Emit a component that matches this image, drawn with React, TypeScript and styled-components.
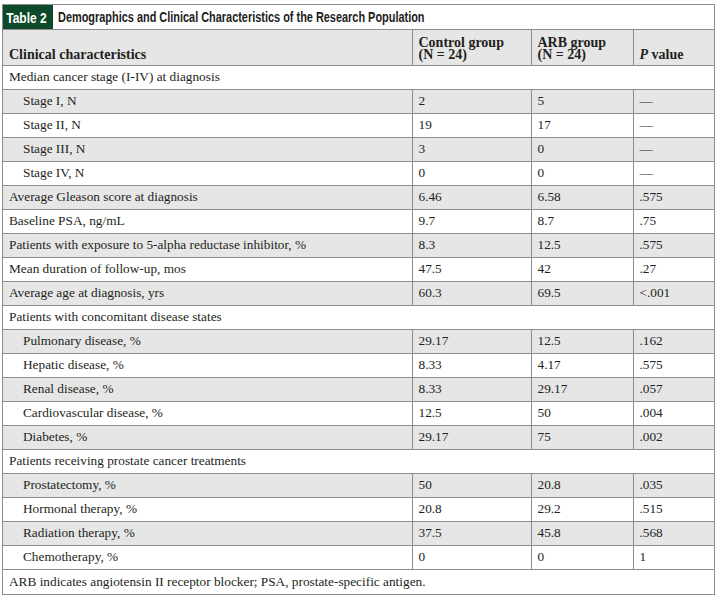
import React from 'react'
import styled, { createGlobalStyle } from 'styled-components'

const Global = createGlobalStyle`
  html, body { margin: 0; padding: 0; background: #ffffff; }
  body { font-family: "Liberation Serif", "Times New Roman", serif; color: #231f20; }
`

const Page = styled.div`
  padding: 4px 3px 0 2px;
`

const Frame = styled.div`
  width: 711px;
  border: 1px solid #8d8d8d;
`

const TitleBar = styled.div`
  display: flex;
  align-items: stretch;
  height: 24px;
  border-bottom: 1px solid #8d8d8d;
  font-family: "Liberation Sans", Arial, sans-serif;
  font-weight: 700;
  overflow: hidden;
`

const Label = styled.div`
  display: flex;
  align-items: center;
  width: 50px;
  background: #0c4a2a;
  color: #ffffff;
  font-size: 15px;
  span {
    display: inline-block;
    padding-left: 4px;
    transform: scaleX(0.8);
    transform-origin: left center;
    white-space: nowrap;
  }
`

const Caption = styled.div`
  display: flex;
  align-items: center;
  padding-left: 5px;
  color: #1d1d1b;
  font-size: 14px;
  span {
    display: inline-block;
    transform: scaleX(0.78);
    transform-origin: left center;
    white-space: nowrap;
  }
`

const Table = styled.table`
  width: 100%;
  border-collapse: collapse;
  table-layout: fixed;
  font-size: 13.3px;
`

const Head = styled.th<{ $w: number }>`
  box-sizing: border-box;
  width: ${p => p.$w}px;
  height: 35px;
  background: #e6e6e6;
  text-align: left;
  vertical-align: bottom;
  padding: 0 6px 4px 6px;
  font-weight: 700;
  font-size: 14px;
  line-height: 12px;
  border-left: 1px solid #8d8d8d;
  &:first-child { border-left: none; }
`

const Row = styled.tr<{ $shade?: boolean }>`
  background: ${p => (p.$shade ? '#e6e6e6' : '#ffffff')};
  border-top: 1px solid #8d8d8d;
`

const Cell = styled.td<{ $indent?: boolean }>`
  box-sizing: border-box;
  height: 24px;
  padding: 0 6px 0 ${p => (p.$indent ? '20px' : '6px')};
  vertical-align: middle;
  white-space: nowrap;
  border-left: 1px solid #8d8d8d;
  &:first-child { border-left: none; }
`

const Span = styled.td<{ $tall?: boolean }>`
  box-sizing: border-box;
  height: ${p => (p.$tall ? '25px' : '24px')};
  padding: 0 6px;
  vertical-align: middle;
  white-space: nowrap;
`

type Line =
  | { kind: 'group'; text: string; note?: boolean }
  | { kind: 'data'; label: string; a: string; b: string; p: string; indent?: boolean; shade?: boolean }

const lines: Line[] = [
  { kind: 'group', text: 'Median cancer stage (I-IV) at diagnosis' },
  { kind: 'data', label: 'Stage I, N', a: '2', b: '5', p: '\u2014', indent: true, shade: true },
  { kind: 'data', label: 'Stage II, N', a: '19', b: '17', p: '\u2014', indent: true },
  { kind: 'data', label: 'Stage III, N', a: '3', b: '0', p: '\u2014', indent: true, shade: true },
  { kind: 'data', label: 'Stage IV, N', a: '0', b: '0', p: '\u2014', indent: true },
  { kind: 'data', label: 'Average Gleason score at diagnosis', a: '6.46', b: '6.58', p: '.575', shade: true },
  { kind: 'data', label: 'Baseline PSA, ng/mL', a: '9.7', b: '8.7', p: '.75' },
  { kind: 'data', label: 'Patients with exposure to 5-alpha reductase inhibitor, %', a: '8.3', b: '12.5', p: '.575', shade: true },
  { kind: 'data', label: 'Mean duration of follow-up, mos', a: '47.5', b: '42', p: '.27' },
  { kind: 'data', label: 'Average age at diagnosis, yrs', a: '60.3', b: '69.5', p: '<.001', shade: true },
  { kind: 'group', text: 'Patients with concomitant disease states' },
  { kind: 'data', label: 'Pulmonary disease, %', a: '29.17', b: '12.5', p: '.162', indent: true, shade: true },
  { kind: 'data', label: 'Hepatic disease, %', a: '8.33', b: '4.17', p: '.575', indent: true },
  { kind: 'data', label: 'Renal disease, %', a: '8.33', b: '29.17', p: '.057', indent: true, shade: true },
  { kind: 'data', label: 'Cardiovascular disease, %', a: '12.5', b: '50', p: '.004', indent: true },
  { kind: 'data', label: 'Diabetes, %', a: '29.17', b: '75', p: '.002', indent: true, shade: true },
  { kind: 'group', text: 'Patients receiving prostate cancer treatments' },
  { kind: 'data', label: 'Prostatectomy, %', a: '50', b: '20.8', p: '.035', indent: true, shade: true },
  { kind: 'data', label: 'Hormonal therapy, %', a: '20.8', b: '29.2', p: '.515', indent: true },
  { kind: 'data', label: 'Radiation therapy, %', a: '37.5', b: '45.8', p: '.568', indent: true, shade: true },
  { kind: 'data', label: 'Chemotherapy, %', a: '0', b: '0', p: '1', indent: true },
  { kind: 'group', text: 'ARB indicates angiotensin II receptor blocker; PSA, prostate-specific antigen.', note: true },
]

export default function App() {
  return (
    <>
      <Global />
      <Page>
        <Frame>
          <TitleBar>
            <Label><span>Table 2</span></Label>
            <Caption><span>Demographics and Clinical Characteristics of the Research Population</span></Caption>
          </TitleBar>
          <Table>
            <thead>
              <tr>
                <Head $w={409}>Clinical characteristics</Head>
                <Head $w={119}>Control group<br />(N = 24)</Head>
                <Head $w={102}>ARB group<br />(N = 24)</Head>
                <Head $w={81}><i>P</i> value</Head>
              </tr>
            </thead>
            <tbody>
              {lines.map((l, i) =>
                l.kind === 'group' ? (
                  <Row key={i}>
                    <Span colSpan={4} $tall={l.note}>{l.text}</Span>
                  </Row>
                ) : (
                  <Row key={i} $shade={l.shade}>
                    <Cell $indent={l.indent}>{l.label}</Cell>
                    <Cell>{l.a}</Cell>
                    <Cell>{l.b}</Cell>
                    <Cell>{l.p}</Cell>
                  </Row>
                )
              )}
            </tbody>
          </Table>
        </Frame>
      </Page>
    </>
  )
}
